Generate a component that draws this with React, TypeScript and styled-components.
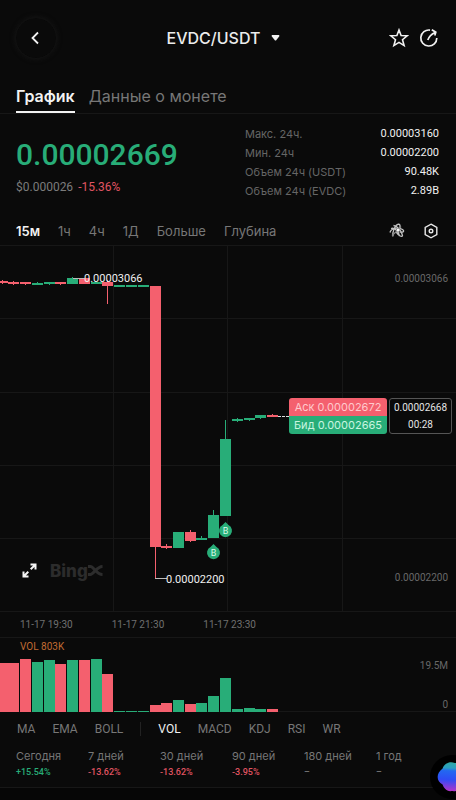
import React from "react";
import styled, { createGlobalStyle } from "styled-components";

const GREEN = "#28ad78";
const RED = "#f4606e";
const LINE = "#171717";

const GlobalStyle = createGlobalStyle`
  * { box-sizing: border-box; }
  body { margin: 0; background: #0a0a0a; }
  button { background: none; border: 0; padding: 0; margin: 0; font: inherit; color: inherit; cursor: pointer; }
  svg { display: block; }
`;

const Page = styled.main`
  position: relative;
  display: flex;
  flex-direction: column;
  min-height: 100vh;
  overflow: hidden;
  background: #0a0a0a;
  color: #ececec;
  font-family: Inter, "Noto Sans", sans-serif;
`;

const Header = styled.header`
  display: grid;
  grid-template-columns: 56px 1fr 64px;
  align-items: center;
  height: 76px;
  padding: 0 17px 0 16px;
`;

const BackButton = styled.button`
  display: grid;
  place-items: center;
  width: 40px;
  height: 40px;
  border-radius: 50%;
  box-shadow: 0 0 0 1px #101010, 0 0 5px 1px #151515;
`;

const PairButton = styled.button`
  display: flex;
  align-items: center;
  justify-self: center;
  gap: 11px;
  font-size: 16px;
  font-weight: 500;
`;

const HeaderActions = styled.div`
  display: flex;
  justify-content: flex-end;
  gap: 10px;
`;

const Tabs = styled.nav`
  display: flex;
  gap: 14px;
  height: 38px;
  padding: 0 16px;
  border-bottom: 1px solid ${LINE};
`;

const Tab = styled.button<{ $active?: boolean }>`
  height: 37px;
  padding-top: 4px;
  border-bottom: 2px solid ${(p) => (p.$active ? "#f2f2f2" : "transparent")};
  color: ${(p) => (p.$active ? "#f2f2f2" : "#777")};
  font-size: 16px;
  font-weight: ${(p) => (p.$active ? 600 : 400)};
`;

const Summary = styled.section`
  display: flex;
  justify-content: space-between;
  padding: 10px 17px 0 16px;
  height: 102px;
`;

const PriceBlock = styled.div`
  padding-top: 12px;
  font-family: Roboto, sans-serif;
`;

const Price = styled.div`
  color: ${GREEN};
  font-size: 30px;
  line-height: 38px;
  font-weight: 500;
`;

const SubPrice = styled.div`
  display: flex;
  gap: 5px;
  color: #7c7c7c;
  font-size: 12px;
  line-height: 26px;
`;

const Change = styled.span`
  color: #e05462;
`;

const Stats = styled.dl`
  display: grid;
  grid-template-columns: 1fr auto;
  grid-auto-rows: 19px;
  align-items: center;
  width: 194px;
  margin: 0;
  dt { color: #666; font-size: 11px; }
  dd { margin: 0; text-align: right; font: 11px Roboto, sans-serif; color: #f0f0f0; }
`;

const Intervals = styled.nav`
  display: flex;
  align-items: center;
  gap: 18px;
  height: 29px;
  padding: 0 17px 0 16px;
  color: #777;
  font-size: 13px;
`;

const IntervalButton = styled.button<{ $active?: boolean }>`
  color: ${(p) => (p.$active ? "#f2f2f2" : "inherit")};
  font-weight: ${(p) => (p.$active ? 600 : 400)};
`;

const Tools = styled.div`
  display: flex;
  gap: 18px;
  margin-left: auto;
`;

const ChartArea = styled.section`
  position: relative;
  svg.plot { width: 100%; height: auto; }
`;

const ScaleLabel = styled.span<{ $top: string }>`
  position: absolute;
  right: 8px;
  top: ${(p) => p.$top};
  color: #686868;
  font: 10px/12px Roboto, sans-serif;
`;

const Quotes = styled.div`
  position: absolute;
  right: 4px;
  top: 41.6%;
  display: flex;
  gap: 2px;
`;

const AskBid = styled.div`
  width: 98px;
  border-radius: 3px;
  overflow: hidden;
  font-size: 11px;
  line-height: 18px;
  text-align: center;
  white-space: nowrap;
`;

const QuoteRow = styled.div<{ $side: "ask" | "bid" }>`
  background: ${(p) => (p.$side === "ask" ? RED : GREEN)};
  color: ${(p) => (p.$side === "ask" ? "#ffc9cd" : "#c9f5e0")};
`;

const LastPrice = styled.div`
  width: 63px;
  border: 1px solid #555;
  border-radius: 3px;
  background: #0a0a0a;
  color: #e4e4e4;
  font: 10px/17px Roboto, sans-serif;
  text-align: center;
`;

const Brand = styled.div`
  position: absolute;
  left: 22px;
  top: 86%;
  display: flex;
  align-items: center;
  gap: 13px;
  color: #2c2c2c;
  font: 800 17px/20px Inter, sans-serif;
`;

const BrandName = styled.span`
  display: flex;
  align-items: center;
`;

const TimeAxis = styled.div`
  display: flex;
  gap: 39px;
  height: 26px;
  padding-left: 20px;
  border-bottom: 1px solid ${LINE};
  color: #707070;
  font: 10px/26px Roboto, sans-serif;
`;

const VolumeTag = styled.span`
  position: absolute;
  left: 20px;
  top: 3px;
  color: #c06a32;
  font: 10px/12px Roboto, sans-serif;
`;

const Indicators = styled.nav`
  display: flex;
  align-items: center;
  gap: 17px;
  height: 32px;
  padding: 0 17px;
  color: #777;
  font: 12px Roboto, sans-serif;
`;

const Indicator = styled.button<{ $active?: boolean }>`
  color: ${(p) => (p.$active ? "#f2f2f2" : "inherit")};
`;

const Divider = styled.span`
  width: 1px;
  height: 14px;
  background: #222;
`;

const Periods = styled.section`
  display: grid;
  grid-template-columns: repeat(6, 1fr);
  height: 43px;
  padding: 3px 8px 0 16px;
  border-bottom: 1px solid ${LINE};
`;

const PeriodName = styled.div`
  color: #777;
  font-size: 11px;
  line-height: 16px;
  white-space: nowrap;
`;

const PeriodValue = styled.div<{ $tone: "up" | "down" | "none" }>`
  color: ${(p) => (p.$tone === "up" ? GREEN : p.$tone === "down" ? "#e05462" : "#777")};
  font: 500 9px/16px Roboto, sans-serif;
`;

const BelowFold = styled.div`
  flex: 1;
  background: #060606;
`;

const AssistantButton = styled.button`
  position: absolute;
  right: -18px;
  top: 755px;
  display: grid;
  place-items: center;
  width: 44px;
  height: 44px;
  border-radius: 50%;
  background: #000;
`;

type Candle = [x: number, side: "g" | "r", top: number, bottom: number, high: number, low: number, volTop: number];

// Heights are measured from the top edge of each plot.
const candles: Candle[] = [
  [-3, "r", 36, 38, 35, 39, 25],
  [8, "r", 37, 39, 36, 40, 25],
  [20, "r", 37, 39, 37, 40, 21],
  [32, "g", 38, 40, 37, 40, 24],
  [44, "g", 37, 39, 37, 40, 22],
  [55, "r", 37, 39, 37, 40, 26],
  [67, "g", 33, 39, 32, 39, 22],
  [79, "r", 33, 39, 33, 39, 22],
  [91, "g", 37, 39, 37, 39, 21],
  [102, "r", 37, 41, 35, 59, 36],
  [114, "g", 40, 42, 40, 42, 73],
  [126, "g", 40, 42, 40, 42, 73],
  [138, "g", 40, 42, 40, 42, 73],
  [150, "r", 41, 302, 41, 333, 67],
  [161, "r", 301, 303, 299, 304, 65],
  [173, "g", 287, 303, 287, 303, 62],
  [185, "r", 287, 296, 285, 297, 66],
  [196, "g", 293, 295, 291, 295, 65],
  [208, "g", 270, 293, 265, 293, 58],
  [220, "g", 194, 271, 175, 271, 40],
  [232, "g", 174, 176, 173, 177, 71],
  [244, "g", 173, 175, 173, 176, 70],
  [255, "g", 170, 173, 170, 174, 71],
  [267, "r", 170, 172, 169, 172, 71],
];

const toneOf = (side: "g" | "r") => (side === "g" ? GREEN : RED);

const BuyMarker = ({ x, y }: { x: number; y: number }) => (
  <g transform={`translate(${x} ${y})`}>
    <path d="M0-9 3-6A6.5 6.5 0 1 1-3-6Z" fill={GREEN} />
    <text y="3" textAnchor="middle" fontFamily="Roboto, sans-serif" fontSize="9" fill="#d9fbe9">B</text>
  </g>
);

const PricePlot = () => (
  <svg className="plot" viewBox="0 0 456 367" role="img" aria-label="EVDC/USDT">
    <g stroke={LINE}>
      {[0.5, 73.5, 147.5, 220.5, 293.5, 366.5].map((y) => <path key={y} d={`M0 ${y}H456`} />)}
      {[113.5, 227.5, 342.5].map((x) => <path key={x} d={`M${x} 0V367`} />)}
    </g>
    {candles.map(([x, side, top, bottom, high, low]) => (
      <g key={x} fill={toneOf(side)}>
        <rect x={x + 5} y={high} width="1" height={low - high} />
        <rect x={x} y={top} width="11" height={bottom - top} />
      </g>
    ))}
    <path d="M73 33.5H84M155 333.5H167" stroke="#bbb" />
    <path d="M278 171.5H290" stroke="#ddd" strokeDasharray="3 1" />
    <g fontFamily="Roboto, sans-serif" fontSize="11" fill="#f0f0f0">
      <text x="84" y="37">0.00003066</text>
      <text x="166" y="338">0.00002200</text>
    </g>
    <BuyMarker x={225.5} y={286} />
    <BuyMarker x={213.5} y={308} />
  </svg>
);

const VolumePlot = () => (
  <svg className="plot" viewBox="0 0 456 75" role="img" aria-label="VOL">
    <path d="M0 73.5H456" stroke={LINE} />
    {candles.map(([x, side, , , , , volTop]) => (
      <rect key={x} x={x} y={volTop} width="11" height={74 - volTop} fill={toneOf(side)} />
    ))}
  </svg>
);

const stats = [
  ["Макс. 24ч.", "0.00003160"],
  ["Мин. 24ч", "0.00002200"],
  ["Объем 24ч (USDT)", "90.48K"],
  ["Объем 24ч (EVDC)", "2.89B"],
];

const periods: [string, string, "up" | "down" | "none"][] = [
  ["Сегодня", "+15.54%", "up"],
  ["7 дней", "-13.62%", "down"],
  ["30 дней", "-13.62%", "down"],
  ["90 дней", "-3.95%", "down"],
  ["180 дней", "–", "none"],
  ["1 год", "–", "none"],
];

export default function App() {
  return (
    <Page>
      <GlobalStyle />
      <Header>
        <BackButton aria-label="Назад">
          <svg width="12" height="14" viewBox="0 0 12 14" fill="none" stroke="#f2f2f2" strokeWidth="1.8">
            <path d="M8 1.5 2.5 7 8 12.5" />
          </svg>
        </BackButton>
        <PairButton>
          EVDC/USDT
          <svg width="9" height="6" viewBox="0 0 9 6" fill="#f2f2f2"><path d="M1 0H8L8.5 1 5 5.5H4L.5 1Z" /></svg>
        </PairButton>
        <HeaderActions>
          <button aria-label="Избранное">
            <svg width="20" height="20" viewBox="0 0 20 20" fill="none" stroke="#f2f2f2" strokeWidth="1.6">
              <path d="m10 2 2.1 5.5 6.1.3-4.7 3.9 1.6 5.9L10 14.4l-5.1 3.2 1.6-5.9-4.7-3.9 6.1-.3Z" />
            </svg>
          </button>
          <button aria-label="Поделиться">
            <svg width="20" height="20" viewBox="0 0 20 20" fill="none" stroke="#f2f2f2" strokeWidth="1.7">
              <path d="M11 2.1A8 8 0 1 0 17.8 10M8.8 12C9.8 8.8 11.5 6.6 16 4.4M12.8 1.8 16.8 4.2 15.8 7.5" />
            </svg>
          </button>
        </HeaderActions>
      </Header>
      <Tabs>
        <Tab $active>График</Tab>
        <Tab>Данные о монете</Tab>
      </Tabs>
      <Summary>
        <PriceBlock>
          <Price>0.00002669</Price>
          <SubPrice>$0.000026 <Change>-15.36%</Change></SubPrice>
        </PriceBlock>
        <Stats>
          {stats.map(([name, value]) => (
            <React.Fragment key={name}><dt>{name}</dt><dd>{value}</dd></React.Fragment>
          ))}
        </Stats>
      </Summary>
      <Intervals>
        {["15м", "1ч", "4ч", "1Д", "Больше", "Глубина"].map((t, i) => (
          <IntervalButton key={t} $active={i === 0}>{t}</IntervalButton>
        ))}
        <Tools>
          <button aria-label="Индикаторы">
            <svg width="16" height="16" viewBox="0 0 16 16" fill="none" stroke="#c4c4c4" strokeWidth="1.3">
              <path d="M1 9.5C2 5 9 4 13.5 6.5C16 8 14 10 10.5 9M4 13.5C3 9 6 2 9.5 1.2C12 1 11 6 9.5 8.5M4.5 2.5C8 2.5 13 8 13.5 12.5C13 15 9 12 7 9M2 5.5C5 4.5 9 7 10.5 13" />
              <path d="M3 12.5 8.5 7.5 12 3.5" stroke="#8a8a8a" />
              <circle cx="9" cy="7" r="1.2" fill="#fff" stroke="none" />
            </svg>
          </button>
          <button aria-label="Настройки">
            <svg width="16" height="16" viewBox="0 0 16 16" fill="none" stroke="#e8e8e8" strokeWidth="1.4">
              <path d="M8 1.2 13.8 4.5V11.5L8 14.8 2.2 11.5V4.5Z" />
              <circle cx="8" cy="8" r="1.8" />
            </svg>
          </button>
        </Tools>
      </Intervals>
      <ChartArea>
        <PricePlot />
        <ScaleLabel $top="7.5%">0.00003066</ScaleLabel>
        <ScaleLabel $top="89%">0.00002200</ScaleLabel>
        <Quotes>
          <AskBid>
            <QuoteRow $side="ask">Аск 0.00002672</QuoteRow>
            <QuoteRow $side="bid">Бид 0.00002665</QuoteRow>
          </AskBid>
          <LastPrice>0.00002668<br />00:28</LastPrice>
        </Quotes>
        <Brand>
          <button aria-label="Развернуть">
            <svg width="15" height="15" viewBox="0 0 15 15" fill="none" stroke="#f5f5f5" strokeWidth="2">
              <path d="M8.5 1.5H13.5V6.5M13 2 8.7 6.3M6.3 8.7 2 13M1.5 8.5V13.5H6.5" />
            </svg>
          </button>
          <BrandName>
            Bing
            <svg width="15" height="11" viewBox="0 0 15 11" fill="none" stroke="#2c2c2c" strokeWidth="3">
              <path d="M0 1.5H2.5C5.5 1.5 8.5 9.5 14.5 9.5M14.5 1.5C8.5 1.5 5.5 9.5 2.5 9.5H0" />
            </svg>
          </BrandName>
        </Brand>
      </ChartArea>
      <TimeAxis>
        <span>11-17 19:30</span><span>11-17 21:30</span><span>11-17 23:30</span>
      </TimeAxis>
      <ChartArea>
        <VolumePlot />
        <VolumeTag>VOL 803K</VolumeTag>
        <ScaleLabel $top="29%">19.5M</ScaleLabel>
        <ScaleLabel $top="81%">0</ScaleLabel>
      </ChartArea>
      <Indicators>
        {["MA", "EMA", "BOLL"].map((t) => <Indicator key={t}>{t}</Indicator>)}
        <Divider />
        {["VOL", "MACD", "KDJ", "RSI", "WR"].map((t) => <Indicator key={t} $active={t === "VOL"}>{t}</Indicator>)}
      </Indicators>
      <Periods>
        {periods.map(([name, value, tone]) => (
          <div key={name}>
            <PeriodName>{name}</PeriodName>
            <PeriodValue $tone={tone}>{value}</PeriodValue>
          </div>
        ))}
      </Periods>
      <BelowFold />
      <AssistantButton aria-label="Помощник">
        <svg width="32" height="32" viewBox="0 0 34 34">
          <defs>
            <linearGradient id="orb" x1="0.5" y1="0" x2="0.45" y2="1">
              <stop offset="0" stopColor="#2fa9a4" />
              <stop offset="0.2" stopColor="#2b9fc0" />
              <stop offset="0.3" stopColor="#2368f0" />
              <stop offset="0.6" stopColor="#2f4cf5" />
              <stop offset="1" stopColor="#b433c8" />
            </linearGradient>
          </defs>
          <path d="M7 8C9 2 15 0 20 2C29 3 33 11 32 19C31 28 24 33 17 32C11 33 8 28 7 25C0 21 0 13 7 8Z" fill="url(#orb)" />
        </svg>
      </AssistantButton>
    </Page>
  );
}
